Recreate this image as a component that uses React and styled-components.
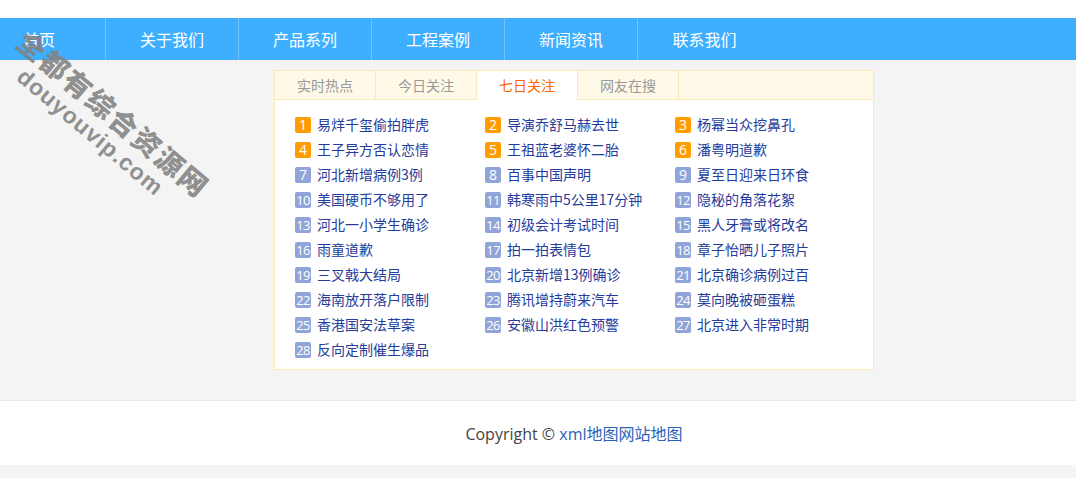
import React, { useState } from 'react';
import styled, { createGlobalStyle } from 'styled-components';

const GlobalStyle = createGlobalStyle`
  html, body {
    margin: 0;
    padding: 0;
    background: #f4f4f4;
    font-family: "Open Sans", "Noto Sans CJK SC", sans-serif;
  }
  ul {
    margin: 0;
    padding: 0;
    list-style: none;
  }
  a {
    text-decoration: none;
  }
`;

const Page = styled.div`
  position: relative;
  overflow: hidden;
  width: 100%;
  min-height: 478px;
`;

const TopStrip = styled.div`
  height: 18px;
  background: #fff;
`;

const NavBar = styled.div`
  height: 42px;
  background: #3eaeff;
  overflow: hidden;
`;

const NavList = styled.ul`
  display: flex;
  margin-left: -27px !important;
`;

const NavItem = styled.li`
  width: 133px;
  height: 42px;
  line-height: 42px;
  text-align: center;
  color: #fff;
  font-size: 16px;
  font-family: "Noto Sans CJK SC", sans-serif;
  border-right: ${props => (props.last ? 'none' : '1px solid #74c3fd')};
  box-sizing: border-box;
`;

const Main = styled.div`
  padding: 10px 0 30px;
  background: #f4f4f4;
`;

const Panel = styled.div`
  width: 600px;
  margin-left: 274px;
  box-sizing: border-box;
  border: 1px solid #fce9b8;
  background: #fff;
`;

const TabBar = styled.ul`
  display: flex;
  height: 28px;
  background: #fff9e8;
  border-bottom: 1px solid #fce9b8;
`;

const Tab = styled.li`
  width: 100px;
  height: ${props => (props.active ? '29px' : '28px')};
  line-height: 28px;
  text-align: center;
  font-size: 14px;
  font-family: "Noto Sans CJK SC", sans-serif;
  color: ${props => (props.active ? '#ff6600' : '#999')};
  background: ${props => (props.active ? '#fff' : 'transparent')};
  border-right: 1px solid #fce9b8;
  cursor: pointer;
`;

const HotList = styled.ul`
  display: grid;
  grid-template-columns: repeat(3, 190px);
  padding: 12px 0 7px 20px !important;
`;

const HotItem = styled.li`
  display: flex;
  align-items: center;
  height: 25px;
  font-size: 14px;
`;

const Rank = styled.span`
  display: inline-block;
  width: 16px;
  height: 16px;
  line-height: 16px;
  border-radius: 2px;
  margin-right: 6px;
  text-align: center;
  color: #fff;
  font-size: ${props => (props.wide ? '13px' : '14px')};
  letter-spacing: ${props => (props.wide ? '-0.6px' : '0')};
  font-family: "Open Sans", sans-serif;
  background: ${props => (props.top ? '#ff9c00' : '#8fa4d9')};
`;

const HotLink = styled.a`
  color: #263b9a;
  font-family: "Noto Sans CJK SC", sans-serif;
  line-height: 25px;
`;

const Footer = styled.div`
  height: 64px;
  background: #fff;
  border-top: 1px solid #e8e8e8;
  margin-bottom: 12px;
`;

const FooterText = styled.p`
  width: 600px;
  margin: 0 0 0 274px;
  line-height: 64px;
  text-align: center;
  font-size: 16px;
  color: #444;
`;

const FooterLink = styled.a`
  color: #2b63b8;
  font-family: ${props => (props.cjk ? '"Noto Sans CJK SC", sans-serif' : 'inherit')};
`;

const Watermark = styled.div`
  position: absolute;
  left: ${props => props.x}px;
  top: ${props => props.y}px;
  transform: rotate(40deg);
  transform-origin: left center;
  white-space: nowrap;
  font-weight: 900;
  font-size: ${props => props.size}px;
  letter-spacing: ${props => props.spacing}px;
  color: rgba(130, 130, 130, 0.9);
  font-family: ${props => (props.cjk ? '"Noto Sans CJK SC", sans-serif' : '"Liberation Sans", sans-serif')};
  pointer-events: none;
`;

const navItems = ['首页', '关于我们', '产品系列', '工程案例', '新闻资讯', '联系我们'];
const tabs = ['实时热点', '今日关注', '七日关注', '网友在搜'];

const hotWords = [
  '易烊千玺偷拍胖虎', '导演乔舒马赫去世', '杨幂当众挖鼻孔',
  '王子异方否认恋情', '王祖蓝老婆怀二胎', '潘粤明道歉',
  '河北新增病例3例', '百事中国声明', '夏至日迎来日环食',
  '美国硬币不够用了', '韩寒雨中5公里17分钟', '隐秘的角落花絮',
  '河北一小学生确诊', '初级会计考试时间', '黑人牙膏或将改名',
  '雨童道歉', '拍一拍表情包', '章子怡晒儿子照片',
  '三叉戟大结局', '北京新增13例确诊', '北京确诊病例过百',
  '海南放开落户限制', '腾讯增持蔚来汽车', '莫向晚被砸蛋糕',
  '香港国安法草案', '安徽山洪红色预警', '北京进入非常时期',
  '反向定制催生爆品',
];

export default function App() {
  const [activeTab, setActiveTab] = useState(2);

  return (
    <Page>
      <GlobalStyle />
      <TopStrip />
      <NavBar>
        <NavList>
          {navItems.map((item, i) => (
            <NavItem key={item} last={i === navItems.length - 1}>{item}</NavItem>
          ))}
        </NavList>
      </NavBar>
      <Main>
        <Panel>
          <TabBar>
            {tabs.map((tab, i) => (
              <Tab key={tab} active={i === activeTab} onClick={() => setActiveTab(i)}>
                {tab}
              </Tab>
            ))}
          </TabBar>
          <HotList>
            {hotWords.map((word, i) => (
              <HotItem key={word}>
                <Rank top={i < 6} wide={i >= 9}>{i + 1}</Rank>
                <HotLink href="#">{word}</HotLink>
              </HotItem>
            ))}
          </HotList>
        </Panel>
      </Main>
      <Footer>
        <FooterText>
          Copyright © <FooterLink href="#">xml<FooterLink as="span" cjk>地图</FooterLink></FooterLink>
          <FooterLink href="#" cjk>网站地图</FooterLink>
        </FooterText>
      </Footer>
      <Watermark x={22} y={16} size={28} spacing={2} cjk>全都有综合资源网</Watermark>
      <Watermark x={20} y={60} size={23} spacing={1}>douyouvip.com</Watermark>
    </Page>
  );
}
